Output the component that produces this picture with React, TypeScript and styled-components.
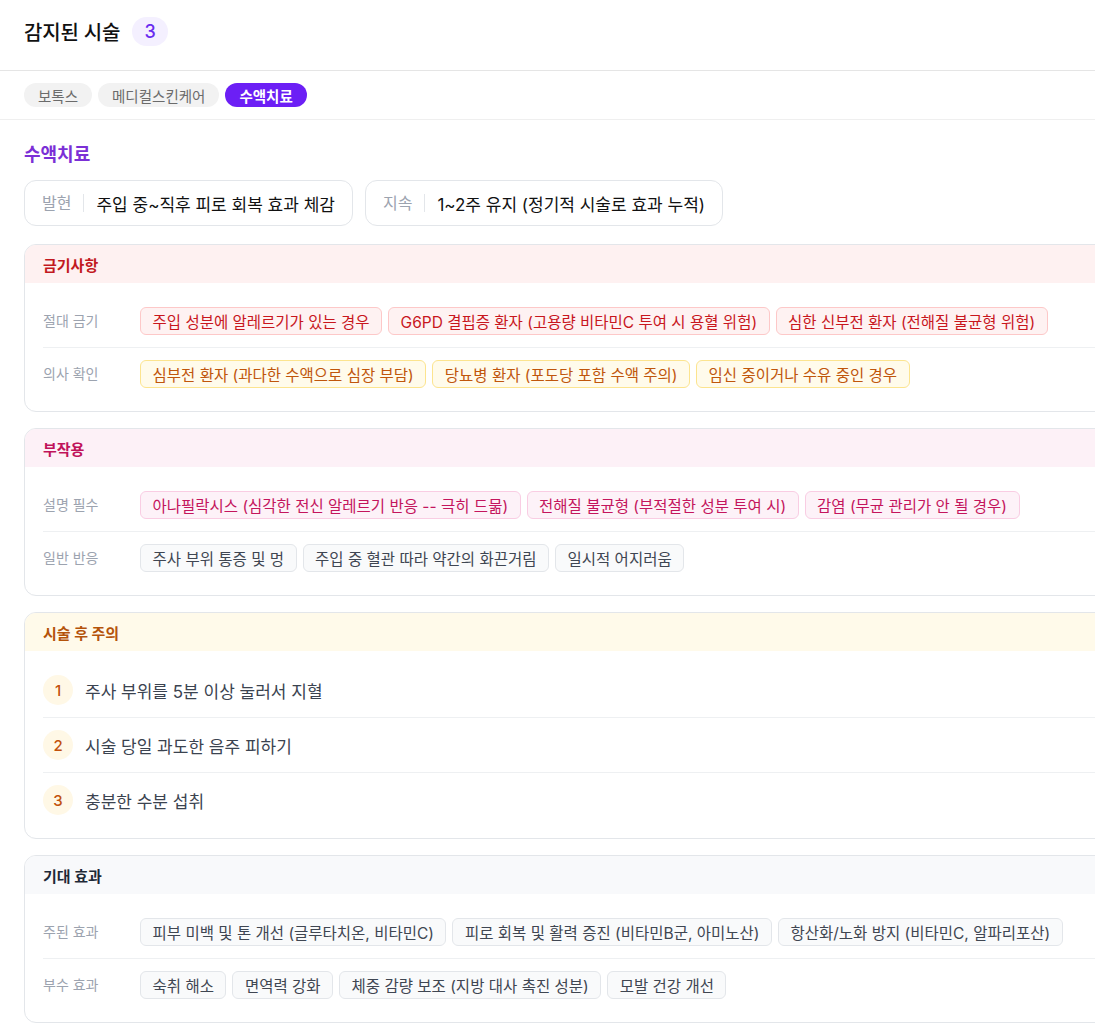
import * as React from 'react';
import styled, { createGlobalStyle } from 'styled-components';

const GlobalStyle = createGlobalStyle`
	html, body {
		margin: 0;
		padding: 0;
		background: #ffffff;
		overflow-x: hidden;
	}
	body {
		font-family: Inter, "Noto Sans CJK KR", "Noto Sans", sans-serif;
		color: #111827;
		-webkit-font-smoothing: antialiased;
	}
	* {
		box-sizing: border-box;
	}
`;

type Tone = 'red' | 'amber' | 'pink' | 'gray';

const tones: Record<Tone, { headBg: string; title: string; chipBg: string; chipBorder: string; chipText: string }> = {
	red: { headBg: '#fef1f1', title: '#c2191f', chipBg: '#fef2f2', chipBorder: '#fdc8c8', chipText: '#c8161d' },
	amber: { headBg: '#fffaea', title: '#b4530a', chipBg: '#fffbeb', chipBorder: '#fce48f', chipText: '#c0560c' },
	pink: { headBg: '#fdf1f7', title: '#c0135a', chipBg: '#fdf2f8', chipBorder: '#f9cde3', chipText: '#c4155d' },
	gray: { headBg: '#f8f9fb', title: '#1f2937', chipBg: '#f9fafb', chipBorder: '#e3e6ea', chipText: '#3f4652' },
};

const Page = styled.div`
	width: 1124px;
`;

const Header = styled.header`
	display: flex;
	align-items: center;
	gap: 12px;
	height: 71px;
	padding: 0 24px 8px;
	border-bottom: 1px solid #e5e5e5;
`;

const Title = styled.h1`
	margin: 0;
	font-size: 20px;
	font-weight: 500;
	color: #111111;
	letter-spacing: -0.2px;
`;

const CountBadge = styled.span`
	display: inline-flex;
	align-items: center;
	justify-content: center;
	height: 29px;
	min-width: 36px;
	padding: 0 12px;
	border-radius: 15px;
	background: #f4f0ff;
	color: #6a2cf0;
	font-size: 18px;
	font-weight: 500;
`;

const TabBar = styled.nav`
	display: flex;
	gap: 6px;
	padding: 12px 24px;
	border-bottom: 1px solid #efefef;
`;

const Tab = styled.button<{ $active?: boolean }>`
	height: 24px;
	padding: 0 14px;
	border: none;
	border-radius: 12px;
	font-family: inherit;
	font-size: 14.5px;
	font-weight: ${p => (p.$active ? 700 : 400)};
	background: ${p => (p.$active ? '#6c1ff5' : '#f2f2f2')};
	color: ${p => (p.$active ? '#ffffff' : '#6b6b6b')};
	cursor: pointer;
`;

const Content = styled.main`
	display: flex;
	flex-direction: column;
	padding: 20px 0 0 24px;
`;

const SectionTitle = styled.h2`
	margin: 0 0 14px;
	font-size: 18px;
	font-weight: 700;
	color: #7b2fd6;
`;

const InfoRow = styled.div`
	display: flex;
	gap: 12px;
	margin-bottom: 18px;
`;

const InfoCard = styled.div`
	display: flex;
	align-items: center;
	height: 46px;
	padding: 0 17px;
	border: 1px solid #e3e6ea;
	border-radius: 12px;
`;

const InfoLabel = styled.span`
	font-size: 16px;
	color: #9ca3af;
	padding-right: 12px;
	border-right: 1px solid #e3e6ea;
	line-height: 18px;
`;

const InfoValue = styled.span`
	padding-left: 12px;
	font-size: 17px;
	font-weight: 400;
	color: #111111;
`;

const Card = styled.section`
	border: 1px solid #e3e6ea;
	border-radius: 12px;
	overflow: hidden;
	margin-bottom: 16px;
`;

const CardHead = styled.div<{ $tone: Tone }>`
	display: flex;
	align-items: center;
	height: 38px;
	padding: 0 18px;
	background: ${p => tones[p.$tone].headBg};
	color: ${p => tones[p.$tone].title};
	font-size: 15px;
	font-weight: 700;
`;

const CardBody = styled.div`
	padding: 12px 0 11px 18px;
`;

const Row = styled.div`
	display: flex;
	align-items: flex-start;
	padding: 12px 0;
	& + & {
		border-top: 1px solid #eef0f2;
	}
`;

const RowLabel = styled.span`
	flex: 0 0 97px;
	padding-top: 3px;
	font-size: 14px;
	color: #9ca3af;
`;

const Chips = styled.div`
	display: flex;
	flex-wrap: wrap;
	gap: 6px;
`;

const Chip = styled.span<{ $tone: Tone }>`
	display: inline-flex;
	align-items: center;
	height: 28px;
	padding: 0 11.5px;
	border: 1px solid ${p => tones[p.$tone].chipBorder};
	border-radius: 6px;
	background: ${p => tones[p.$tone].chipBg};
	color: ${p => tones[p.$tone].chipText};
	font-size: 15.5px;
	white-space: nowrap;
`;

const StepRow = styled.div`
	display: flex;
	align-items: center;
	gap: 12px;
	padding: 12px 0;
	& + & {
		border-top: 1px solid #eef0f2;
	}
`;

const StepNum = styled.span`
	display: inline-flex;
	align-items: center;
	justify-content: center;
	width: 30px;
	height: 30px;
	border-radius: 50%;
	background: #fff8e6;
	color: #c2510c;
	font-size: 15px;
	font-weight: 500;
`;

const StepText = styled.span`
	font-size: 17px;
	color: #3b4350;
`;

type ChipRow = { label: string; tone: Tone; items: string[] };

const contraindications: ChipRow[] = [
	{
		label: '절대 금기',
		tone: 'red',
		items: ['주입 성분에 알레르기가 있는 경우', 'G6PD 결핍증 환자 (고용량 비타민C 투여 시 용혈 위험)', '심한 신부전 환자 (전해질 불균형 위험)'],
	},
	{
		label: '의사 확인',
		tone: 'amber',
		items: ['심부전 환자 (과다한 수액으로 심장 부담)', '당뇨병 환자 (포도당 포함 수액 주의)', '임신 중이거나 수유 중인 경우'],
	},
];

const sideEffects: ChipRow[] = [
	{
		label: '설명 필수',
		tone: 'pink',
		items: ['아나필락시스 (심각한 전신 알레르기 반응 -- 극히 드묾)', '전해질 불균형 (부적절한 성분 투여 시)', '감염 (무균 관리가 안 될 경우)'],
	},
	{
		label: '일반 반응',
		tone: 'gray',
		items: ['주사 부위 통증 및 멍', '주입 중 혈관 따라 약간의 화끈거림', '일시적 어지러움'],
	},
];

const effects: ChipRow[] = [
	{
		label: '주된 효과',
		tone: 'gray',
		items: ['피부 미백 및 톤 개선 (글루타치온, 비타민C)', '피로 회복 및 활력 증진 (비타민B군, 아미노산)', '항산화/노화 방지 (비타민C, 알파리포산)'],
	},
	{
		label: '부수 효과',
		tone: 'gray',
		items: ['숙취 해소', '면역력 강화', '체중 감량 보조 (지방 대사 촉진 성분)', '모발 건강 개선'],
	},
];

const aftercare = ['주사 부위를 5분 이상 눌러서 지혈', '시술 당일 과도한 음주 피하기', '충분한 수분 섭취'];

const ChipCard: React.FC<{ title: string; tone: Tone; rows: ChipRow[] }> = ({ title, tone, rows }) => (
	<Card>
		<CardHead $tone={tone}>{title}</CardHead>
		<CardBody>
			{rows.map(row => (
				<Row key={row.label}>
					<RowLabel>{row.label}</RowLabel>
					<Chips>
						{row.items.map(item => (
							<Chip key={item} $tone={row.tone}>
								{item}
							</Chip>
						))}
					</Chips>
				</Row>
			))}
		</CardBody>
	</Card>
);

const App: React.FC = () => {
	const [tab, setTab] = React.useState('수액치료');
	return (
		<Page>
			<GlobalStyle />
			<Header>
				<Title>감지된 시술</Title>
				<CountBadge>3</CountBadge>
			</Header>
			<TabBar>
				{['보톡스', '메디컬스킨케어', '수액치료'].map(t => (
					<Tab key={t} $active={tab === t} onClick={() => setTab(t)}>
						{t}
					</Tab>
				))}
			</TabBar>
			<Content>
				<SectionTitle>수액치료</SectionTitle>
				<InfoRow>
					<InfoCard>
						<InfoLabel>발현</InfoLabel>
						<InfoValue>주입 중~직후 피로 회복 효과 체감</InfoValue>
					</InfoCard>
					<InfoCard>
						<InfoLabel>지속</InfoLabel>
						<InfoValue>1~2주 유지 (정기적 시술로 효과 누적)</InfoValue>
					</InfoCard>
				</InfoRow>
				<ChipCard title="금기사항" tone="red" rows={contraindications} />
				<ChipCard title="부작용" tone="pink" rows={sideEffects} />
				<Card>
					<CardHead $tone="amber">시술 후 주의</CardHead>
					<CardBody>
						{aftercare.map((text, i) => (
							<StepRow key={text}>
								<StepNum>{i + 1}</StepNum>
								<StepText>{text}</StepText>
							</StepRow>
						))}
					</CardBody>
				</Card>
				<ChipCard title="기대 효과" tone="gray" rows={effects} />
			</Content>
		</Page>
	);
};

export default App;
